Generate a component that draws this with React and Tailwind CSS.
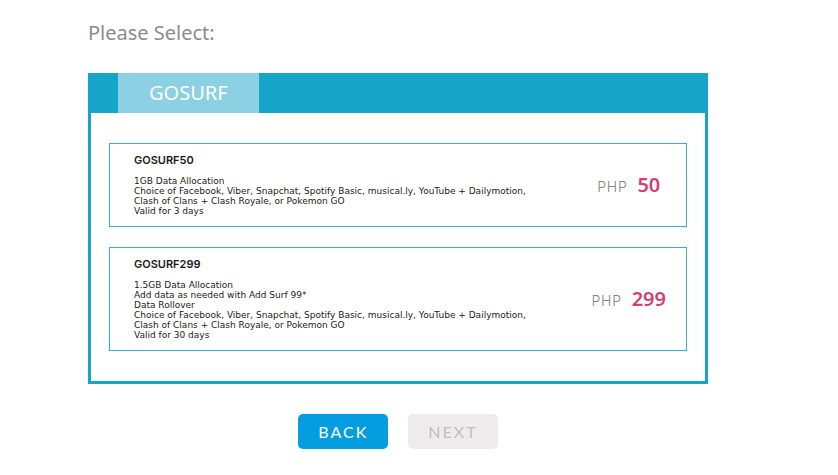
import { useState } from 'react';

const promos = [
  {
    name: 'GOSURF50',
    price: 50,
    details: [
      '1GB Data Allocation',
      'Choice of Facebook, Viber, Snapchat, Spotify Basic, musical.ly, YouTube + Dailymotion,',
      'Clash of Clans + Clash Royale, or Pokemon GO',
      'Valid for 3 days',
    ],
  },
  {
    name: 'GOSURF299',
    price: 299,
    details: [
      '1.5GB Data Allocation',
      'Add data as needed with Add Surf 99*',
      'Data Rollover',
      'Choice of Facebook, Viber, Snapchat, Spotify Basic, musical.ly, YouTube + Dailymotion,',
      'Clash of Clans + Clash Royale, or Pokemon GO',
      'Valid for 30 days',
    ],
  },
];

function PromoCard({ promo, onSelect }) {
  return (
    <button type="button" onClick={() => onSelect(promo.name)}
      className="flex w-full items-center border border-[#35b0d2] bg-white py-[10px] pl-6 text-left">
      <div className="flex-1">
        <h2 className="mb-[10px] font-['Inter','Noto_Sans',sans-serif] text-[11px] leading-[12px] font-semibold text-[#1a1a1a]">{promo.name}</h2>
        {promo.details.map((line) => (
          <p key={line} className="font-['DejaVu_Sans','Noto_Sans',sans-serif] text-[9px] leading-[10px] text-[#222222]">{line}</p>
        ))}
      </div>
      <div className="flex w-1/5 items-baseline justify-center gap-[10px] pt-[2px] pr-1 leading-6">
        <span className="font-['Inter','Noto_Sans',sans-serif] text-[14px] font-light tracking-wider text-[#858585]">PHP</span>
        <span className="text-[20px] font-semibold text-[#d33f75]">{promo.price}</span>
      </div>
    </button>
  );
}

export default function App() {
  const [selected, setSelected] = useState(null);

  return (
    <main className="bg-white pt-5 pr-[130px] pb-6 pl-[88px] font-['Noto_Sans','Open_Sans',sans-serif]">
      <h1 className="mb-[27px] text-[20px] leading-[26px] text-[#8c8c8c]">Please Select:</h1>

      <section className="border-x-[3px] border-b-[3px] border-[#17a4c9]">
        <div role="tablist" className="flex bg-[#17a4c9] pl-[27px]">
          <button type="button" role="tab" aria-selected="true"
            className="bg-[#8bd1e3] px-[31px] text-[20px] leading-10 text-white">
            GOSURF
          </button>
        </div>
        <div className="flex flex-col gap-5 px-[18px] py-[30px]">
          {promos.map((promo) => (
            <PromoCard key={promo.name} promo={promo} onSelect={setSelected} />
          ))}
        </div>
      </section>

      <div className="mt-[30px] flex justify-center gap-5 font-['Lato','Noto_Sans',sans-serif]">
        <button type="button" className="rounded-[5px] bg-[#039de0] px-5 text-[16px] leading-[35px] tracking-[2px] text-white">
          BACK
        </button>
        <button type="button" disabled={!selected}
          className="rounded-[5px] bg-[#039de0] px-5 text-[16px] leading-[35px] tracking-[2px] text-white disabled:bg-[#eeebec] disabled:text-[#bfbfbf]">
          NEXT
        </button>
      </div>
    </main>
  );
}
